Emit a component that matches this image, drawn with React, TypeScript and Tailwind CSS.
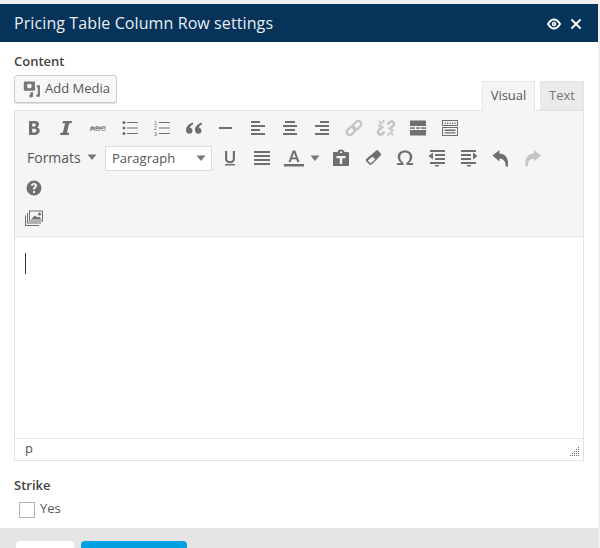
import type { ReactNode } from 'react';
import { X } from 'lucide-react';

const Ico = ({ children, muted }: { children: ReactNode; muted?: boolean }) => (
    <span className={`w-[32px] h-[30px] flex items-center justify-center shrink-0 ${muted ? 'text-[#c4c4c4]' : 'text-[#6f6f6f]'}`}>
        <svg width="20" height="20" viewBox="0 0 20 20" fill="currentColor">{children}</svg>
    </span>
);

const Lines = ({ rows }: { rows: [number, number, number][] }) => (
    <>
        {rows.map(([x, y, w]) => <rect key={`${x}-${y}`} x={x} y={y} width={w} height="2" />)}
    </>
);

const Caret = () => (
    <svg width="10" height="6" viewBox="0 0 10 6" className="text-[#777] shrink-0" fill="currentColor"><path d="M0.5 0.5h9L5 6z" /></svg>
);

const Icons = {
    bold: <path fillRule="evenodd" d="M5 3h6c2.400 0 4 1.200 4 3.300 0 1.400-.8 2.400-2 2.900 1.600.4 2.700 1.600 2.700 3.400 0 2.400-1.900 4.400-4.700 4.400H5V3zm3.200 2.500v3h2c1 0 1.600-.6 1.600-1.500s-.6-1.500-1.600-1.500h-2zm0 5.300v3.700h2.300c1.200 0 1.900-.7 1.900-1.900s-.7-1.800-1.900-1.800H8.200z" />,
    italic: <path d="M7 3h9l-.5 2.200h-2.300L10.900 14.800h2.300L12.700 17H4l.5-2.200h2.300L9.100 5.200H6.500z" />,
    strike: (
        <>
            <rect x="2" y="9.500" width="16" height="1" />
            <text x="10" y="13" textAnchor="middle" fontSize="8" fontFamily="'Liberation Sans', sans-serif">ABC</text>
        </>
    ),
    bullets: (
        <>
            <circle cx="4" cy="4.500" r="1.500" /><circle cx="4" cy="10" r="1.500" /><circle cx="4" cy="15.500" r="1.500" />
            <rect x="7" y="4" width="11" height="1" /><rect x="7" y="9.500" width="11" height="1" /><rect x="7" y="15" width="11" height="1" />
        </>
    ),
    numbers: (
        <>
            <text x="3.500" y="6.500" textAnchor="middle" fontSize="5.500" fontFamily="'Liberation Sans', sans-serif">1</text>
            <text x="3.500" y="12" textAnchor="middle" fontSize="5.500" fontFamily="'Liberation Sans', sans-serif">2</text>
            <text x="3.500" y="17.500" textAnchor="middle" fontSize="5.500" fontFamily="'Liberation Sans', sans-serif">3</text>
            <rect x="7" y="4" width="11" height="1" /><rect x="7" y="9.500" width="11" height="1" /><rect x="7" y="15" width="11" height="1" />
        </>
    ),
    quote: <path d="M9 4.500C5.500 5.500 2 8 2 12c0 2.200 1.400 3.800 3.200 3.800S8.500 14.400 8.500 12.700c0-1.600-1-2.800-2.600-2.900.3-1.500 1.600-2.700 3.100-3.300zM18 4.500c-3.500 1-7 3.500-7 7.500 0 2.200 1.400 3.800 3.200 3.800s3.300-1.400 3.300-3.100c0-1.600-1-2.800-2.600-2.900.3-1.500 1.600-2.700 3.100-3.300z" />,
    hr: <rect x="3" y="9" width="13" height="2" />,
    alignLeft: <Lines rows={[[3, 3, 9], [3, 7, 14], [3, 11, 9], [3, 15, 14]]} />,
    alignCenter: <Lines rows={[[5, 3, 10], [3, 7, 14], [5, 11, 10], [3, 15, 14]]} />,
    alignRight: <Lines rows={[[8, 3, 9], [3, 7, 14], [8, 11, 9], [3, 15, 14]]} />,
    link: (
        <g fill="none" stroke="currentColor" strokeWidth="2.200">
            <rect x="10" y="2.500" width="6" height="9.500" rx="3" transform="rotate(45 13 7.250)" />
            <rect x="4" y="8" width="6" height="9.500" rx="3" transform="rotate(45 7 12.750)" />
        </g>
    ),
    unlink: (
        <g fill="none" stroke="currentColor" strokeWidth="2.600">
            <path d="M11.500 6.500l2-2.200c1.200-1.200 2.900-1.100 3.800-.1s.9 2.500-.2 3.700l-2.600 2.600-2 .5" />
            <path d="M8.500 13.500l-2 2.200c-1.200 1.200-2.900 1.100-3.800.1s-.9-2.500.2-3.700l2.600-2.600 2-.5" />
            <path d="M3 3l3.200 3.200M2 7.500h3M7.500 2v3M17 17l-3.200-3.200M18 12.500h-3M12.500 18v-3" strokeWidth="1.800" />
        </g>
    ),
    more: (
        <>
            <rect x="2" y="2.500" width="16" height="5.500" />
            <rect x="2" y="9.300" width="5" height="1.500" /><rect x="8" y="9.300" width="4" height="1.500" /><rect x="13" y="9.300" width="5" height="1.500" />
            <rect x="2" y="12" width="16" height="5.500" />
        </>
    ),
    kitchen: (
        <>
            <path fillRule="evenodd" d="M2 2h16v6H2zm1 1v4h14V3z" />
            <path fillRule="evenodd" d="M2 9h16v9H2zm1 1v7h14v-7z" />
            <path d="M4.500 4.500h1.200v1.500H4.500zM7 4.500h1.200v1.500H7zM9.500 4.500h1.200v1.500H9.500zM12 4.500h1.200v1.500H12zM14.500 4.500h1.200v1.500h-1.200z" />
            <path d="M4.500 11.500h11V13h-11zM4.500 14.200h11v1.300h-11z" />
        </>
    ),
    underline: (
        <>
            <path d="M5 3h2.200v7.500c0 1.800 1 2.700 2.800 2.700s2.800-.9 2.800-2.700V3H15v7.500c0 3-2 4.700-5 4.700s-5-1.700-5-4.700z" />
            <rect x="5" y="16" width="10" height="1.500" />
        </>
    ),
    justify: <Lines rows={[[2, 3, 16], [2, 7, 16], [2, 11, 16], [2, 15, 16]]} />,
    color: (
        <>
            <path fillRule="evenodd" d="M8.700 2.500h2.600L15.500 14h-2.300l-.9-2.700H7.700L6.800 14H4.500zm-.4 7h3.400L10 4.800z" />
            <rect x="0" y="16" width="20" height="2.500" />
        </>
    ),
    paste: <path fillRule="evenodd" d="M3 4h3.500c.3-1.500 1.600-2.500 3.500-2.500S13.200 2.500 13.500 4H17c.6 0 1 .4 1 1v12c0 .6-.4 1-1 1H3c-.6 0-1-.4-1-1V5c0-.6.4-1 1-1zm6-.5V5h2V3.500zM5.500 8v2.200h3.300V16h2.400v-5.800h3.300V8z" />,
    eraser: <path fillRule="evenodd" d="M13 2.800c.6-.6 1.500-.6 2.100 0l2.600 2.600c.6.6.6 1.500 0 2.100L9 16.200c-.8.8-2 .8-2.800 0l-3-3c-.6-.6-.6-1.500 0-2.100zm-3.400 6L4.800 12.600l2.900 2.900 4.400-4.200z" />,
    omega: <path d="M2 17v-2h4.300C4 13.500 2.700 11.300 2.700 8.800 2.700 5 5.700 2.500 10 2.500s7.300 2.500 7.300 6.300c0 2.500-1.300 4.700-3.600 6.200H18v2h-6.500v-2.200c2-1 3.300-3 3.300-5.800 0-2.700-1.900-4.400-4.800-4.400S5.200 6.300 5.200 9c0 2.800 1.300 4.800 3.300 5.800V17z" />,
    outdent: (
        <>
            <path d="M1.500 8L6 4.500v7z" />
            <Lines rows={[[3, 2, 15], [8, 6, 10], [8, 10, 10], [3, 14, 15]]} />
            <rect x="8" y="17" width="4" height="1.500" />
        </>
    ),
    indent: (
        <>
            <path d="M18.500 8L14 4.500v7z" />
            <Lines rows={[[2, 2, 15], [2, 6, 10], [2, 10, 10], [2, 14, 15]]} />
            <rect x="8" y="17" width="4" height="1.500" />
        </>
    ),
    undo: <path d="M1.500 7.500L8.500 2v3.600c5 .3 8.500 3.700 8.500 9v4h-2.300c0-5-2.200-7.700-6.200-8V13.500z" />,
    redo: <path d="M18 7.500L11 2v3.600c-5 .3-8.500 3.700-8.500 9v4h2.300c0-5 2.200-7.700 6.200-8V13.500z" />,
    help: <path fillRule="evenodd" d="M10 2.500a7.500 7.500 0 1 1 0 15 7.500 7.500 0 0 1 0-15zM9 13v2h2v-2zM10 5C8.200 5 7 6 6.900 7.700h2c.1-.7.500-1 1.100-1s1 .4 1 .9c0 1.200-2.100 1.400-2.100 4h2c0-1.800 2.200-2 2.200-4.200C13.100 6 11.800 5 10 5z" />,
    gallery: (
        <g transform="translate(0 1)">
            <path fillRule="evenodd" d="M5 1.500h14v11H5zm1 1v9h12v-9z" />
            <path d="M7 10.500l4-4 2.500 2 1.200-1 2.300 2v1zM15.500 3.500a1.500 1.500 0 1 1 0 3 1.500 1.500 0 0 1 0-3z" />
            <path d="M3 4h1v9.500h13v1H3z" />
            <path d="M1 6.500h1V16h13v1H1z" />
        </g>
    ),
};

const Field = ({ children }: { children: ReactNode }) => (
    <div className="text-[13px] leading-[18px] font-semibold text-[#444]">{children}</div>
);

export default function App() {
    return (
        <div className="w-[600px] h-[548px] overflow-hidden bg-white flex flex-col font-['Open_Sans',sans-serif] border-r-2 border-[#f0f0f0] pt-[4px] relative">
            <div className="absolute top-0 left-0 right-0 h-[4px] bg-[#eef0f2]" />
            <header className="h-[38px] shrink-0 bg-[#06335a] flex items-center justify-between pl-[14px] pr-[14px] text-white">
                <h1 className="text-[16px] leading-[22px] tracking-[0.1px] text-[#e9eef2] -mt-[1px]">Pricing Table Column Row settings</h1>
                <div className="flex items-center gap-[7px] mt-[1px]">
                    <svg width="14" height="12" viewBox="0 0 14 12" fill="none" stroke="white">
                        <path d="M1 6C2.800 3 4.700 1.500 7 1.500S11.200 3 13 6c-1.800 3-3.700 4.500-6 4.500S2.800 9 1 6z" strokeWidth="2" />
                        <circle cx="7" cy="6" r="1.500" strokeWidth="1.600" />
                    </svg>
                    <X size={16} strokeWidth={3} />
                </div>
            </header>

            <main className="flex-1 min-h-0 pl-[14px] pr-[14px]">
                <div className="pt-[10px]"><Field>Content</Field></div>

                <div className="flex items-end justify-between mt-[5px] h-[35px]">
                    <button className="self-start h-[28px] w-[103px] flex items-center gap-[4px] pl-[7px] bg-[#f7f7f7] border border-[#cccccc] rounded-[3px] shadow-[0_1px_0_#e0e0e0] text-[13px] text-[#555]">
                        <svg width="19" height="19" viewBox="0 0 18 18" fill="#777" className="shrink-0">
                            <path fillRule="evenodd" d="M3 1.500h8c.8 0 1.300.5 1.300 1.300V9c0 .8-.5 1.300-1.300 1.300H3c-.8 0-1.300-.5-1.300-1.300V2.800c0-.8.5-1.300 1.300-1.300zM7 3.500a2.300 2.300 0 1 0 0 4.600 2.300 2.300 0 0 0 0-4.600z" />
                            <path d="M14 5h3v9.500c0 1-.8 1.700-1.800 1.700s-1.700-.6-1.700-1.400.7-1.300 1.500-1.300V7H14zM8 11.500h2.500v3.500c0 .9-.8 1.500-1.800 1.500S6.800 16 6.800 15.100s.7-1.400 1.200-1.400z" />
                        </svg>
                        <span className="whitespace-nowrap">Add Media</span>
                    </button>
                    <div className="flex items-end gap-[5px] relative top-[1px] z-10">
                        <div className="h-[30px] w-[53px] flex items-center justify-center pb-[2px] bg-[#f5f5f5] border border-[#e5e5e5] border-b-0 text-[13px] text-[#555]">Visual</div>
                        <div className="h-[29px] w-[44px] mb-[1px] flex items-center justify-center bg-[#ebebeb] border border-[#e5e5e5] text-[13px] text-[#777]">Text</div>
                    </div>
                </div>

                <div className="border border-[#e2e2e2] w-[570px] bg-white">
                    <div className="h-[126px] bg-[#f5f5f5] border-b border-[#e2e2e2] pt-[2px] pl-[3px]">
                        <div className="flex items-center h-[30px]">
                            <Ico>{Icons.bold}</Ico>
                            <Ico>{Icons.italic}</Ico>
                            <Ico>{Icons.strike}</Ico>
                            <Ico>{Icons.bullets}</Ico>
                            <Ico>{Icons.numbers}</Ico>
                            <Ico>{Icons.quote}</Ico>
                            <Ico>{Icons.hr}</Ico>
                            <Ico>{Icons.alignLeft}</Ico>
                            <Ico>{Icons.alignCenter}</Ico>
                            <Ico>{Icons.alignRight}</Ico>
                            <Ico muted>{Icons.link}</Ico>
                            <Ico muted>{Icons.unlink}</Ico>
                            <Ico>{Icons.more}</Ico>
                            <Ico>{Icons.kitchen}</Ico>
                        </div>
                        <div className="flex items-center h-[30px]">
                            <div className="flex items-center w-[87px] pl-[9px] pb-[2px] text-[14px] text-[#555]">
                                <span>Formats</span>
                                <span className="ml-[6px] flex"><Caret /></span>
                            </div>
                            <div className="w-[107px] h-[25px] bg-white border border-[#dcdcdc] flex items-center justify-between pl-[6px] pr-[5px] text-[13px] text-[#555]">
                                <span className="mt-[1px]">Paragraph</span>
                                <Caret />
                            </div>
                            <span className="ml-[2px]"><Ico>{Icons.underline}</Ico></span>
                            <Ico>{Icons.justify}</Ico>
                            <Ico>{Icons.color}</Ico>
                            <span className="w-[15px] flex justify-start"><Caret /></span>
                            <Ico>{Icons.paste}</Ico>
                            <Ico>{Icons.eraser}</Ico>
                            <Ico>{Icons.omega}</Ico>
                            <Ico>{Icons.outdent}</Ico>
                            <Ico>{Icons.indent}</Ico>
                            <Ico>{Icons.undo}</Ico>
                            <Ico muted>{Icons.redo}</Ico>
                        </div>
                        <div className="h-[30px]"><Ico>{Icons.help}</Ico></div>
                        <div className="h-[30px]"><Ico>{Icons.gallery}</Ico></div>
                    </div>
                    <div className="h-[201px] pl-[10px] pt-[16px]">
                        <div className="w-[1px] h-[21px] bg-[#333]" />
                    </div>
                    <div className="h-[22px] border-t border-[#e2e2e2] flex items-center justify-between pl-[10px] pr-[3px] text-[13px] text-[#555]">
                        <span className="-mt-[2px]">p</span>
                        <svg width="10" height="10" viewBox="0 0 10 10" fill="#666" className="mt-[5px]">
                            <rect x="8" y="0" width="1" height="1" /><rect x="6" y="2" width="1" height="1" /><rect x="8" y="2" width="1" height="1" />
                            <rect x="4" y="4" width="1" height="1" /><rect x="6" y="4" width="1" height="1" /><rect x="8" y="4" width="1" height="1" />
                            <rect x="2" y="6" width="1" height="1" /><rect x="4" y="6" width="1" height="1" /><rect x="6" y="6" width="1" height="1" /><rect x="8" y="6" width="1" height="1" />
                            <rect x="0" y="8" width="1" height="1" /><rect x="2" y="8" width="1" height="1" /><rect x="4" y="8" width="1" height="1" /><rect x="6" y="8" width="1" height="1" /><rect x="8" y="8" width="1" height="1" />
                        </svg>
                    </div>
                </div>

                <div className="mt-[15px]"><Field>Strike</Field></div>
                <label className="flex items-center gap-[5px] ml-[5px] mt-[7px] h-[18px] text-[13px] text-[#555]">
                    <span className="w-[16px] h-[16px] border border-[#b5b5b5] bg-white shrink-0 -mt-[1px]" />
                    <span className="-mt-[2px]">Yes</span>
                </label>
            </main>

            <footer className="h-[20px] shrink-0 bg-[#e5e5e5] pl-[16px] pt-[13px] flex gap-[7px] items-start">
                <div className="w-[58px] h-[30px] bg-white rounded-[4px]" />
                <div className="w-[106px] h-[30px] bg-[#00a0e3] rounded-[4px]" />
            </footer>
        </div>
    );
}
